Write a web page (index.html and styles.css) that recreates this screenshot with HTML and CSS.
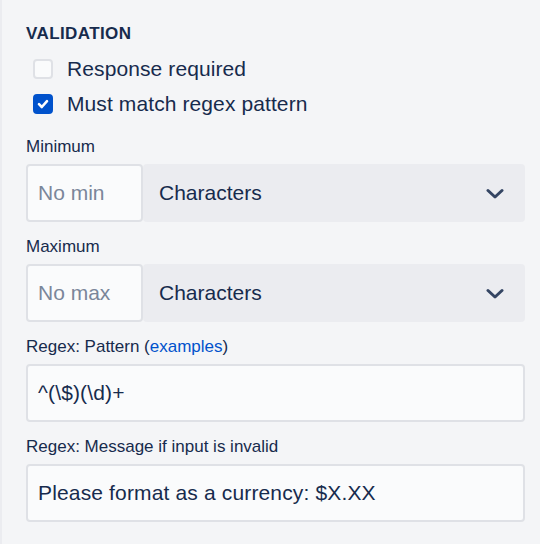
FILE: index.html
```html
<!DOCTYPE html>
<html>
<head>
<meta charset="utf-8">
<link rel="stylesheet" href="styles.css">
</head>
<body>
<div class="panel">
  <h2 class="heading">VALIDATION</h2>
  <div class="check-row">
    <span class="box"></span>
    <span class="check-label">Response required</span>
  </div>
  <div class="check-row">
    <span class="box checked">
      <svg width="14" height="14" viewBox="0 0 14 14"><path d="M3 7.2 L5.8 10 L11 4.2" fill="none" stroke="#fff" stroke-width="2.6" stroke-linecap="round" stroke-linejoin="round"/></svg>
    </span>
    <span class="check-label">Must match regex pattern</span>
  </div>

  <div class="field first">
    <div class="label">Minimum</div>
    <div class="combo">
      <div class="num placeholder">No min</div>
      <div class="select"><span>Characters</span>
        <svg width="18" height="12" viewBox="0 0 18 12"><path d="M2 2.5 L9 9 L16 2.5" fill="none" stroke="#344563" stroke-width="3" stroke-linecap="round" stroke-linejoin="round"/></svg>
      </div>
    </div>
  </div>

  <div class="field">
    <div class="label">Maximum</div>
    <div class="combo">
      <div class="num placeholder">No max</div>
      <div class="select"><span>Characters</span>
        <svg width="18" height="12" viewBox="0 0 18 12"><path d="M2 2.5 L9 9 L16 2.5" fill="none" stroke="#344563" stroke-width="3" stroke-linecap="round" stroke-linejoin="round"/></svg>
      </div>
    </div>
  </div>

  <div class="field">
    <div class="label">Regex: Pattern (<a class="link">examples</a>)</div>
    <div class="text-input">^(\$)(\d)+</div>
  </div>

  <div class="field">
    <div class="label">Regex: Message if input is invalid</div>
    <div class="text-input">Please format as a currency: $X.XX</div>
  </div>
</div>
</body>
</html>
```

FILE: styles.css
```css
html, body {
  margin: 0;
  padding: 0;
  background: #F4F5F7;
}
body {
  width: 540px;
  height: 544px;
  overflow: hidden;
  font-family: "Liberation Sans", Arial, sans-serif;
  color: #172B4D;
}
.panel {
  border-left: 2px solid #EBECF0;
  padding: 24px 15px 0 24px;
  height: 544px;
  box-sizing: border-box;
}
.heading {
  margin: 0 0 7px 0;
  font-size: 17px;
  line-height: 20px;
  font-weight: bold;
  letter-spacing: 0.4px;
}
.check-row {
  display: flex;
  align-items: center;
  height: 35px;
  padding-left: 7px;
}
.box {
  width: 20px;
  height: 20px;
  box-sizing: border-box;
  border: 2px solid #DFE1E6;
  background: #FAFBFC;
  border-radius: 4px;
  margin-right: 14px;
  display: flex;
  align-items: center;
  justify-content: center;
}
.box.checked {
  background: #0052CC;
  border-color: #0052CC;
}
.check-label {
  font-size: 21px;
  line-height: 24px;
  letter-spacing: 0.1px;
}
.field {
  margin-top: 15px;
}
.field.first {
  margin-top: 16px;
}
.label {
  font-size: 17px;
  line-height: 20px;
  margin-bottom: 7px;
}
.link {
  color: #0052CC;
  text-decoration: none;
}
.combo {
  display: flex;
  height: 58px;
}
.num {
  width: 117px;
  box-sizing: border-box;
  border: 2px solid #DFE1E6;
  background: #FAFBFC;
  border-radius: 4px;
  padding: 0 10px;
  display: flex;
  align-items: center;
  font-size: 21px;
}
.placeholder {
  color: #7A869A;
}
.select {
  flex: 1;
  background: #EBECF0;
  border-radius: 4px;
  display: flex;
  align-items: center;
  justify-content: space-between;
  padding: 0 21px 0 16px;
  font-size: 21px;
}
.select svg {
  margin-top: 1px;
}
.text-input {
  height: 58px;
  box-sizing: border-box;
  border: 2px solid #DFE1E6;
  background: #FAFBFC;
  border-radius: 4px;
  padding: 0 10px;
  display: flex;
  align-items: center;
  font-size: 21px;
  letter-spacing: 0.15px;
}
```
